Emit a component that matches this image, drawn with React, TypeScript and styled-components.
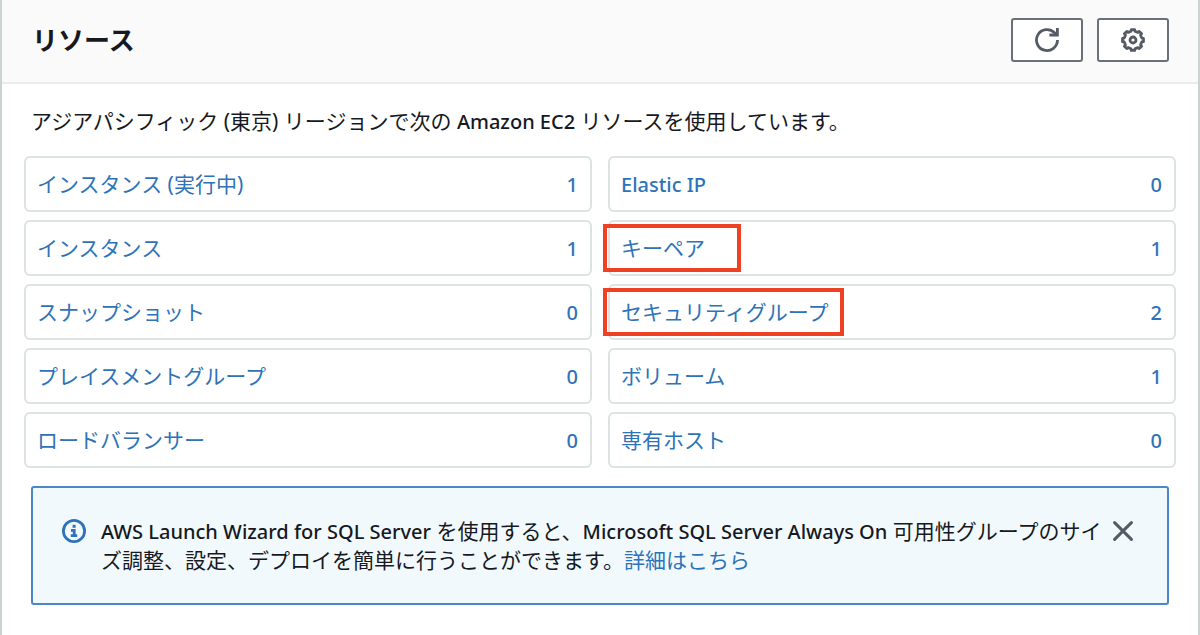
import React from "react";
import styled, { createGlobalStyle } from "styled-components";

const GlobalStyle = createGlobalStyle`
  * {
    box-sizing: border-box;
  }
  body {
    margin: 0;
    background: #ffffff;
    color: #16191f;
    font-family: "Noto Sans", "Noto Sans CJK JP", sans-serif;
    font-size: 21px;
    line-height: 29px;
  }
`;

const Panel = styled.section`
  min-height: 100vh;
  border: solid #ccd3d5;
  border-width: 0 2px;
  background: #ffffff;
`;

const Header = styled.header`
  display: flex;
  align-items: center;
  justify-content: space-between;
  padding: 18px 29px 20px 30px;
  border-bottom: 2px solid #eaeded;
  background: #fafafa;
`;

const Title = styled.h2`
  margin: 0;
  font-size: 26px;
  line-height: 36px;
  font-weight: 700;
`;

const Actions = styled.div`
  display: flex;
  gap: 14px;
`;

const IconButton = styled.button`
  display: flex;
  align-items: center;
  justify-content: center;
  width: 72px;
  height: 44px;
  padding: 0;
  border: 2px solid #6a7079;
  border-radius: 3px;
  background: #ffffff;
  color: #545b64;
  cursor: pointer;
`;

const Intro = styled.p`
  margin: 0;
  padding: 23px 29px 20px;
`;

const Latin = styled.span`
  font-size: 20px;
  font-weight: 500;
`;

const ResourceGrid = styled.ul`
  display: grid;
  grid-template-columns: 1fr 1fr;
  gap: 8px 16px;
  margin: 0;
  padding: 0 22px;
  list-style: none;
`;

const ResourceCard = styled.li`
  position: relative;
  display: flex;
  align-items: center;
  justify-content: space-between;
  height: 56px;
  padding: 0 12px 0 11px;
  border: 2px solid #dde2e2;
  border-radius: 6px;
`;

const Link = styled.a<{ $latin?: boolean }>`
  color: #2e73b8;
  font-size: ${(p) => (p.$latin ? 20 : 21)}px;
  font-weight: ${(p) => (p.$latin ? 500 : 400)};
  text-decoration: none;
`;

const Marker = styled.span<{ $width: number }>`
  position: absolute;
  top: 2px;
  left: -7px;
  width: ${(p) => p.$width}px;
  height: 48px;
  border: 4px solid #ee4023;
  pointer-events: none;
`;

const Notice = styled.aside`
  display: flex;
  align-items: flex-start;
  margin: 18px 29px 0;
  padding: 29px 30px 28px 28px;
  border: 2px solid #4a86c8;
  border-radius: 3px;
  background: #f2f9fd;
`;

const InfoIcon = styled.svg`
  flex: none;
  margin: 2px 15px 0 1px;
`;

const NoticeText = styled.p`
  flex: 1;
  margin: 0;
`;

const CloseButton = styled.button`
  flex: none;
  display: flex;
  margin: 4px 4px 0 6px;
  padding: 0;
  border: 0;
  background: none;
  color: #545b64;
  cursor: pointer;
`;

type Resource = { label: string; count: number; latin?: boolean; marker?: number };

const resources: Resource[] = [
  { label: "インスタンス (実行中)", count: 1 },
  { label: "Elastic IP", count: 0, latin: true },
  { label: "インスタンス", count: 1 },
  { label: "キーペア", count: 1, marker: 138 },
  { label: "スナップショット", count: 0 },
  { label: "セキュリティグループ", count: 2, marker: 241 },
  { label: "プレイスメントグループ", count: 0 },
  { label: "ボリューム", count: 1 },
  { label: "ロードバランサー", count: 0 },
  { label: "専有ホスト", count: 0 },
];

const gearPath = (() => {
  const teeth = 8;
  const points: string[] = [];
  for (let i = 0; i < teeth; i++) {
    const base = (i * 2 * Math.PI) / teeth - Math.PI / 2;
    [
      [-0.22, 9],
      [-0.16, 10.6],
      [0.16, 10.6],
      [0.22, 9],
    ].forEach(([offset, radius]) => {
      const x = 12 + radius * Math.cos(base + offset);
      const y = 12 + radius * Math.sin(base + offset);
      points.push(`${x.toFixed(2)} ${y.toFixed(2)}`);
    });
  }
  return `M${points.join("L")}Z`;
})();

export default function App() {
  return (
    <>
      <GlobalStyle />
      <Panel>
        <Header>
          <Title>リソース</Title>
          <Actions>
            <IconButton type="button" aria-label="更新">
              <svg width="24" height="24" viewBox="0 0 24 24" fill="none" stroke="currentColor" strokeWidth="2.8">
                <path d="M22.5 12A10.5 10.5 0 1 1 19.4 4.6L22 7" />
                <path d="M22.4 0V7H14.4" />
              </svg>
            </IconButton>
            <IconButton type="button" aria-label="設定">
              <svg width="24" height="24" viewBox="0 0 24 24" fill="none" stroke="currentColor" strokeLinejoin="round">
                <path d={gearPath} strokeWidth="2.8" />
                <circle cx="12" cy="12" r="3" strokeWidth="2.8" />
              </svg>
            </IconButton>
          </Actions>
        </Header>
        <Intro>
          アジアパシフィック (東京) リージョンで次の <Latin>Amazon EC2</Latin> リソースを使用しています。
        </Intro>
        <ResourceGrid>
          {resources.map((r) => (
            <ResourceCard key={r.label}>
              <Link href="#" $latin={r.latin}>
                {r.label}
              </Link>
              <Link href="#" $latin>
                {r.count}
              </Link>
              {r.marker && <Marker $width={r.marker} />}
            </ResourceCard>
          ))}
        </ResourceGrid>
        <Notice>
          <InfoIcon width="24" height="24" viewBox="0 0 24 24" fill="none" stroke="#2e73b8" aria-hidden="true">
            <circle cx="12" cy="12" r="10.6" strokeWidth="2.8" />
            <path d="M10.6 7.3H13.6" strokeWidth="3" />
            <path d="M9 11.4H12.2V16.4M8.8 16.6H15.2" strokeWidth="2.8" />
          </InfoIcon>
          <NoticeText>
            <Latin>AWS Launch Wizard for SQL Server</Latin> を使用すると、<Latin>Microsoft SQL Server Always On</Latin>{" "}
            可用性グループのサイズ調整、設定、デプロイを簡単に行うことができます。<Link href="#">詳細はこちら</Link>
          </NoticeText>
          <CloseButton type="button" aria-label="閉じる">
            <svg width="20" height="20" viewBox="0 0 20 20" fill="none" stroke="currentColor" strokeWidth="3" strokeLinecap="round">
              <path d="M1.6 1.6L18.4 18.4M18.4 1.6L1.6 18.4" />
            </svg>
          </CloseButton>
        </Notice>
      </Panel>
    </>
  );
}
